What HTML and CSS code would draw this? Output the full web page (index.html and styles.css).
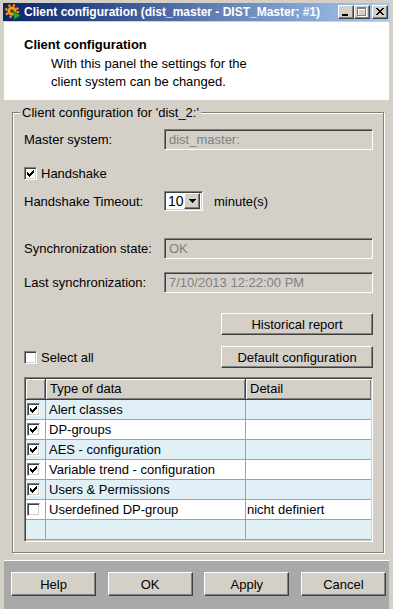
FILE: index.html
```html
<!DOCTYPE html>
<html lang="en">
<head>
    <meta charset="UTF-8">
    <meta name="viewport" content="width=device-width, initial-scale=1.0">
    <title>Client configuration</title>
    <link rel="stylesheet" href="styles.css">
</head>
<body>
    <div class="window">
        <div class="titlebar">
            <svg class="app-icon" width="16" height="16" viewBox="0 0 16 16">
                <circle cx="7" cy="7" r="5.6" fill="none" stroke="#a85a00" stroke-width="3.4" stroke-dasharray="2.3 2.1"/>
                <circle cx="7" cy="7" r="5.6" fill="none" stroke="#f7a51c" stroke-width="2.4" stroke-dasharray="1.6 2.8" stroke-dashoffset="-0.35"/>
                <circle cx="7" cy="7" r="4.6" fill="#f7a51c" stroke="#a85a00" stroke-width="0.8"/>
                <circle cx="7" cy="7" r="1.8" fill="#1a3c8a" stroke="#a85a00" stroke-width="0.8"/>
                <polygon points="9,7.5 15.5,11.5 9,15.5" fill="#22b422" stroke="#0b6a0b" stroke-width="0.8"/>
            </svg>
            <span class="title">Client configuration (dist_master - DIST_Master; #1)</span>
            <div class="title-buttons">
                <span class="tbtn">
                    <svg width="16" height="14" viewBox="0 0 16 14" shape-rendering="crispEdges">
                        <rect x="4" y="9" width="6" height="2" fill="#000"/>
                    </svg>
                </span>
                <span class="tbtn">
                    <svg width="16" height="14" viewBox="0 0 16 14" shape-rendering="crispEdges">
                        <path d="M4 3h9v9h-9z M5 5v6h7v-6z" fill="#fff" fill-rule="evenodd"/>
                        <path d="M3 2h9v9h-9z M4 4v6h7v-6z" fill="#808080" fill-rule="evenodd"/>
                    </svg>
                </span>
                <span class="tbtn tbtn-close">
                    <svg width="16" height="14" viewBox="0 0 16 14" shape-rendering="crispEdges">
                        <path transform="translate(4 3)" d="M0 0h2v1h-2z M6 0h2v1h-2z M1 1h2v1h-2z M5 1h2v1h-2z M2 2h4v1h-4z M3 3h2v1h-2z M2 4h4v1h-4z M1 5h2v1h-2z M5 5h2v1h-2z M0 6h2v1h-2z M6 6h2v1h-2z" fill="#000"/>
                    </svg>
                </span>
            </div>
        </div>

        <div class="client">
            <div class="header">
                <div class="header-title">Client configuration</div>
                <div class="header-text">With this panel the settings for the<br>client system can be changed.</div>
            </div>

            <div class="content">
                <div class="group">
                    <span class="group-label">Client configuration for 'dist_2:'</span>

                    <div class="row row-master">
                        <span class="label">Master system:</span>
                        <div class="field">dist_master:</div>
                    </div>

                    <div class="row row-check">
                        <span class="check">
                            <svg width="7" height="7" viewBox="0 0 7 7" shape-rendering="crispEdges"><path d="M6 0h1v1h-1z M5 1h2v1h-2z M0 2h1v1h-1z M4 2h3v1h-3z M0 3h2v1h-2z M3 3h3v1h-3z M0 4h5v1h-5z M1 5h3v1h-3z M2 6h1v1h-1z"/></svg>
                        </span>
                        <span class="check-label">Handshake</span>
                    </div>

                    <div class="row row-timeout">
                        <span class="label">Handshake Timeout:</span>
                        <div class="combo">
                            <span class="combo-value">10</span>
                            <span class="combo-btn">
                                <svg width="7" height="4" viewBox="0 0 7 4" shape-rendering="crispEdges"><path d="M0 0h7v1h-7z M1 1h5v1h-5z M2 2h3v1h-3z M3 3h1v1h-1z"/></svg>
                            </span>
                        </div>
                        <span class="unit">minute(s)</span>
                    </div>

                    <div class="row row-sync">
                        <span class="label">Synchronization state:</span>
                        <div class="field">OK</div>
                    </div>

                    <div class="row row-last">
                        <span class="label">Last synchronization:</span>
                        <div class="field">7/10/2013 12:22:00 PM</div>
                    </div>

                    <div class="row row-hist">
                        <button class="btn btn-wide">Historical report</button>
                    </div>

                    <div class="row row-default">
                        <div class="select-all">
                            <span class="check"></span>
                            <span class="check-label">Select all</span>
                        </div>
                        <button class="btn btn-wide">Default configuration</button>
                    </div>

                    <div class="grid" id="dataGrid">
                        <div class="hcell"></div>
                        <div class="hcell">Type of data</div>
                        <div class="hcell hcell-last">Detail</div>
                    </div>
                </div>
            </div>

            <div class="footer">
                <button class="btn btn-footer">Help</button>
                <button class="btn btn-footer">OK</button>
                <button class="btn btn-footer">Apply</button>
                <button class="btn btn-footer">Cancel</button>
            </div>
        </div>
    </div>

    <script>
        const grid = document.getElementById('dataGrid');
        const checkSvg = '<svg width="7" height="7" viewBox="0 0 7 7" shape-rendering="crispEdges"><path d="M6 0h1v1h-1z M5 1h2v1h-2z M0 2h1v1h-1z M4 2h3v1h-3z M0 3h2v1h-2z M3 3h3v1h-3z M0 4h5v1h-5z M1 5h3v1h-3z M2 6h1v1h-1z"/></svg>';

        const rows = [
            { name: 'Alert classes', detail: '', checked: true },
            { name: 'DP-groups', detail: '', checked: true },
            { name: 'AES - configuration', detail: '', checked: true },
            { name: 'Variable trend - configuration', detail: '', checked: true },
            { name: 'Users & Permissions', detail: '', checked: true },
            { name: 'Userdefined DP-group', detail: 'nicht definiert', checked: false },
            null
        ];

        rows.forEach((row, index) => {
            const tone = index % 2 === 0 ? 'cell-blue' : 'cell-white';
            const box = row ? `<span class="check check-small">${row.checked ? checkSvg : ''}</span>` : '';
            grid.insertAdjacentHTML('beforeend', `
                <div class="cell cell-check ${tone}">${box}</div>
                <div class="cell ${tone}">${row ? row.name.replace('&', '&amp;') : ''}</div>
                <div class="cell cell-last ${tone}">${row ? row.detail : ''}</div>
            `);
        });
    </script>
</body>
</html>
```

FILE: styles.css
```css
body {
    margin: 0;
    font-family: 'Liberation Sans', Arial, sans-serif;
    font-size: 13px;
    color: #000;
}
.window {
    width: 393px;
    height: 609px;
    box-sizing: border-box;
    padding: 3px 4px 0 3px;
    background: #d4d0c8;
    overflow: hidden;
}
.titlebar {
    height: 18px;
    display: flex;
    align-items: center;
    padding: 0 1px 0 2px;
    background: linear-gradient(to right, #0a246a, #a6caf0);
    color: #fff;
    font-weight: bold;
    font-size: 12px;
}
.app-icon {
    flex: none;
    margin-right: 3px;
}
.title {
    flex: 1;
    white-space: nowrap;
    line-height: 18px;
}
.title-buttons {
    display: flex;
    align-items: center;
}
.tbtn {
    width: 16px;
    height: 14px;
    box-sizing: border-box;
    background: #d4d0c8;
    border: 1px solid;
    border-color: #fff #404040 #404040 #fff;
    box-shadow: inset -1px -1px 0 #808080;
    position: relative;
}
.tbtn svg {
    position: absolute;
    left: -1px;
    top: -1px;
}
.tbtn-close {
    margin-left: 2px;
}

.client {
    margin: 1px 0 0 1px;
}
.header {
    height: 78px;
    box-sizing: border-box;
    background: #fff;
    padding: 15px 0 0 20px;
}
.header-title {
    font-weight: bold;
    line-height: 15px;
}
.header-text {
    margin: 3px 0 0 27px;
    line-height: 18px;
}

.content {
    height: 460px;
    box-sizing: border-box;
    padding: 12px 5px 0 8px;
}
.group {
    position: relative;
    height: 441px;
    box-sizing: border-box;
    border: 1px solid #808080;
    box-shadow: 1px 1px 0 #fff, inset 1px 1px 0 #fff;
    padding: 16px 10px 0 11px;
}
.group-label {
    position: absolute;
    left: 7px;
    top: -8px;
    padding: 0 2px;
    line-height: 15px;
    background: #d4d0c8;
}
.row {
    display: flex;
    align-items: center;
}
.label {
    width: 140px;
    flex: none;
}
.field {
    flex: 1;
    height: 21px;
    box-sizing: border-box;
    border: 1px solid;
    border-color: #808080 #fff #fff #808080;
    box-shadow: inset 1px 1px 0 #404040, inset -1px -1px 0 #d4d0c8;
    padding-left: 4px;
    line-height: 19px;
    color: #808080;
}
.row-master {
    height: 21px;
}
.row-check {
    margin-top: 17px;
    height: 13px;
}
.row-timeout {
    margin-top: 11px;
    height: 20px;
}
.row-sync {
    margin-top: 27px;
}
.row-last {
    margin-top: 13px;
}
.row-hist {
    margin-top: 20px;
    justify-content: flex-end;
}
.row-default {
    margin-top: 11px;
    justify-content: space-between;
}
.select-all {
    display: flex;
    align-items: center;
}

.check {
    width: 13px;
    height: 13px;
    box-sizing: border-box;
    flex: none;
    display: flex;
    align-items: center;
    justify-content: center;
    background: #fff;
    border: 1px solid;
    border-color: #808080 #fff #fff #808080;
    box-shadow: inset 1px 1px 0 #404040, inset -1px -1px 0 #d4d0c8;
}
.check-label {
    margin-left: 4px;
}

.combo {
    width: 39px;
    height: 20px;
    box-sizing: border-box;
    display: flex;
    align-items: center;
    justify-content: space-between;
    background: #fff;
    border: 1px solid;
    border-color: #808080 #fff #fff #808080;
    box-shadow: inset 1px 1px 0 #404040, inset -1px -1px 0 #d4d0c8;
    padding: 2px 2px 2px 3px;
    font-size: 14px;
}
.combo-btn {
    width: 16px;
    height: 16px;
    box-sizing: border-box;
    display: flex;
    align-items: center;
    justify-content: center;
    background: #d4d0c8;
    border: 1px solid;
    border-color: #fff #404040 #404040 #fff;
    box-shadow: inset -1px -1px 0 #808080;
}
.unit {
    margin-left: 11px;
}

.btn {
    font-family: 'Liberation Sans', Arial, sans-serif;
    font-size: 13px;
    color: #000;
    background: #d4d0c8;
    border: 1px solid;
    border-color: #fff #404040 #404040 #fff;
    box-shadow: inset -1px -1px 0 #808080;
    padding: 0;
    box-sizing: border-box;
}
.btn-wide {
    width: 152px;
    height: 22px;
}

.grid {
    margin-top: 9px;
    height: 165px;
    box-sizing: border-box;
    display: grid;
    grid-template-columns: 20px 200px 1fr;
    grid-template-rows: 21px repeat(7, 20px);
    border: 1px solid;
    border-color: #808080 #fff #fff #808080;
    box-shadow: inset 1px 1px 0 #404040, inset -1px -1px 0 #d4d0c8;
    padding: 1px;
}
.hcell {
    background: #d4d0c8;
    box-shadow: inset 1px 1px 0 #fff, inset -1px -1px 0 #808080;
    border-right: 1px solid #404040;
    border-bottom: 1px solid #404040;
    padding-left: 4px;
    line-height: 20px;
}
.hcell:first-child {
    padding-left: 0;
}
.hcell-last {
    border-right: none;
}
.cell {
    border-right: 1px solid #a0a0a0;
    border-bottom: 1px solid #a0a0a0;
    padding-left: 3px;
    line-height: 19px;
    white-space: nowrap;
    overflow: hidden;
}
.cell-last {
    border-right: none;
    padding-left: 1px;
}
.cell-check {
    padding-left: 1px;
    display: flex;
    align-items: center;
}
.cell-blue {
    background: #e1f0f6;
}
.cell-white {
    background: #fff;
}

.footer {
    height: 42px;
    border-top: 1px solid #fff;
    background: #a9a9a9;
    display: flex;
    align-items: flex-start;
    justify-content: space-between;
    padding: 11px 3px 0 7px;
}
.btn-footer {
    width: 85px;
    height: 24px;
}
```
